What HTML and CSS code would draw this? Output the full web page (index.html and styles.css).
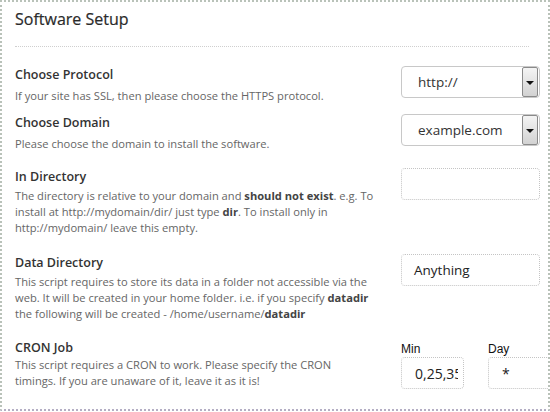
FILE: index.html
```html
<!DOCTYPE html>
<html>
<head>
<meta charset="utf-8">
<link rel="stylesheet" href="styles.css">
</head>
<body>
<div class="panel">
  <h1 class="title">Software Setup</h1>
  <div class="sep"></div>

  <div class="row row-first">
    <div class="info">
      <div class="label">Choose Protocol</div>
      <div class="desc">If your site has SSL, then please choose the HTTPS protocol.</div>
    </div>
    <div class="field">
      <div class="select"><span class="val">http://</span><span class="arrow"></span></div>
    </div>
  </div>

  <div class="row row-second">
    <div class="info">
      <div class="label">Choose Domain</div>
      <div class="desc">Please choose the domain to install the software.</div>
    </div>
    <div class="field">
      <div class="select"><span class="val">example.com</span><span class="arrow"></span></div>
    </div>
  </div>

  <div class="row row-third">
    <div class="info">
      <div class="label mid">In Directory</div>
      <div class="desc">The directory is relative to your domain and <b>should not exist</b>. e.g. To install at http://mydomain/dir/ just type <b>dir</b>. To install only in http://mydomain/ leave this empty.</div>
    </div>
    <div class="field">
      <div class="input"></div>
    </div>
  </div>

  <div class="row row-fourth">
    <div class="info">
      <div class="label mid">Data Directory</div>
      <div class="desc">This script requires to store its data in a folder not accessible via the web. It will be created in your home folder. i.e. if you specify <b>datadir</b> the following will be created - /home/username/<b>datadir</b></div>
    </div>
    <div class="field">
      <div class="input"><span class="ival">Anything</span></div>
    </div>
  </div>

  <div class="row row-cron">
    <div class="info">
      <div class="label tight">CRON Job</div>
      <div class="desc narrow">This script requires a CRON to work. Please specify the CRON timings. If you are unaware of it, leave it as it is!</div>
    </div>
    <div class="cron">
      <div class="cron-col">
        <div class="cron-label">Min</div>
        <div class="cron-input"><span class="cval">0,25,35</span></div>
      </div>
      <div class="cron-col">
        <div class="cron-label">Day</div>
        <div class="cron-input"><span class="cval star">*</span></div>
      </div>
    </div>
  </div>
</div>
</body>
</html>
```

FILE: styles.css
```css
* { box-sizing: border-box; }
html, body { margin: 0; padding: 0; background: #fff; }
body { width: 550px; height: 412px; overflow: hidden; font-family: "Open Sans", "DejaVu Sans", sans-serif; }

.panel {
  width: 550px;
  height: 411px;
  border: 2px dotted #b9c2b9;
  border-bottom-color: #b4aec4;
  background: #fff;
  overflow: hidden;
  padding: 0 0 0 13px;
}

.title {
  margin: 0;
  padding-top: 5px;
  height: 41px;
  font-size: 16px;
  font-weight: 400;
  color: #2a2a2a;
  line-height: 24px;
  -webkit-text-stroke: 0.2px #2a2a2a;
}

.sep {
  width: 514px;
  border-top: 1px dotted #cfcfcf;
  margin-top: 3px;
  margin-bottom: 19px;
}

.row {
  display: flex;
  align-items: flex-start;
  padding-bottom: 16px;
}
.row-first { padding-bottom: 10px; }
.row-second { padding-bottom: 16px; }
.row-third { padding-bottom: 18px; }
.row-fourth { padding-bottom: 17px; }

.info { width: 386px; flex: none; }

.label {
  font-size: 12.5px;
  font-weight: 600;
  color: #333;
  line-height: 18px;
  margin-bottom: 4px;
}
.label.mid { margin-bottom: 2px; }
.label.tight { margin-bottom: 0; }

.desc {
  width: 360px;
  font-size: 11.15px;
  color: #666;
  line-height: 16px;
}
.desc.narrow { width: 345px; }
.desc b { color: #444; font-weight: 700; }

.field { width: 140px; flex: none; }

.select {
  position: relative;
  height: 32px;
  width: 139px;
  border: 1px solid #c8c8c8;
  border-radius: 4px;
  background: #fff;
  display: flex;
  align-items: center;
  padding-left: 16px;
}
.val { font-size: 13.5px; color: #333; }
.arrow {
  position: absolute;
  right: 1px;
  top: 0;
  width: 16px;
  height: 30px;
  border: 1px solid #8a8a8a;
  border-radius: 2px;
  background: linear-gradient(#f4f4f4, #d2d2d2);
}
.arrow::after {
  content: "";
  position: absolute;
  left: 3px;
  top: 13px;
  border-left: 4px solid transparent;
  border-right: 4px solid transparent;
  border-top: 4px solid #111;
}

.input {
  height: 32px;
  width: 139px;
  border: 1px dotted #c4c4c4;
  border-radius: 4px;
  display: flex;
  align-items: center;
  padding-left: 12px;
}
.ival { font-size: 13.5px; color: #222; }

.cron { display: flex; gap: 24px; flex: none; padding-top: 2px; }
.cron-col { width: 63px; flex: none; }
.cron-label {
  font-family: "Liberation Sans", Arial, sans-serif;
  font-size: 12px;
  color: #111;
  line-height: 16px;
}
.cron-input {
  height: 32px;
  width: 63px;
  border: 1px dotted #c4c4c4;
  border-radius: 4px;
  overflow: hidden;
  display: flex;
  align-items: center;
  padding: 0 5px 0 13px;
  white-space: nowrap;
}
.cval { font-size: 14px; color: #222; overflow: hidden; display: block; }
.cval.star { padding-left: 0; }
```
